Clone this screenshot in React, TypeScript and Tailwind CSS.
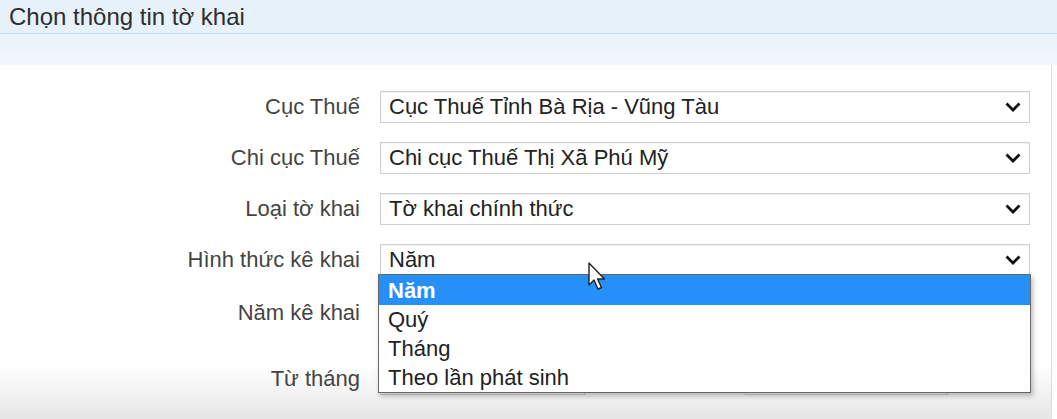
import React from "react";

const Chevron = () => (
  <svg width="16" height="10" viewBox="0 0 16 10" className="shrink-0">
    <path d="M1.5 1.5 L8 8 L14.5 1.5" fill="none" stroke="#111" strokeWidth="2.8" />
  </svg>
);

const Select = ({ value, className = "" }: { value?: string; className?: string }) => (
  <div
    className={`h-[32px] shrink-0 flex items-center justify-between pl-[8px] pr-[8px] bg-white border border-[#cfcfcf] shadow-[inset_0_1px_1px_rgba(0,0,0,0.06)] text-[22px] text-[#222] ${className}`}
  >
    <span className="leading-none">{value}</span>
    <Chevron />
  </div>
);

const Label = ({ text }: { text: string }) => (
  <div className="w-[360px] shrink-0 text-right text-[22px] leading-none text-[#444]">{text}</div>
);

const rows = [
  { label: "Cục Thuế", value: "Cục Thuế Tỉnh Bà Rịa - Vũng Tàu" },
  { label: "Chi cục Thuế", value: "Chi cục Thuế Thị Xã Phú Mỹ" },
  { label: "Loại tờ khai", value: "Tờ khai chính thức" },
  { label: "Hình thức kê khai", value: "Năm" },
];

const options = ["Năm", "Quý", "Tháng", "Theo lần phát sinh"];

export default function App() {
  return (
    <div className="relative w-[1057px] h-[419px] overflow-hidden bg-white font-['Liberation_Sans',Arial,sans-serif] flex flex-col">
      <div className="h-[34px] shrink-0 bg-[#e7f1fa] border-b border-[#c6ddef] px-[9px] flex items-center text-[24px] text-[#2e2e2e]">
        Chọn thông tin tờ khai
      </div>
      <div className="h-[31px] shrink-0 bg-linear-to-b from-[#e9f3fb] to-[#f1f7fd]" />

      <div className="flex-1 bg-linear-to-b from-white from-85% to-[#e6e6e6] border-r border-[#dedede] mr-[5px] pt-[26px]">
        <div className="flex flex-col gap-[19px]">
          {rows.map((r) => (
            <div key={r.label} className="h-[32px] flex items-center gap-[20px]">
              <Label text={r.label} />
              <Select value={r.value} className="w-[650px]" />
            </div>
          ))}
        </div>

        <div className="h-[32px] flex items-center gap-[20px] mt-[21px]">
          <Label text="Năm kê khai" />
          <Select className="w-[205px]" />
        </div>

        <div className="h-[32px] flex items-center mt-[34px]">
          <Label text="Từ tháng" />
          <Select className="w-[205px] ml-[20px]" />
          <div className="w-[160px] shrink-0" />
          <Select className="w-[203px]" />
        </div>
      </div>

      {/* open dropdown list */}
      <div className="absolute left-[378px] top-[274px] w-[653px] bg-white border border-[#666] shadow-[2px_3px_5px_rgba(0,0,0,0.25)] text-[22px] text-[#222]">
        {options.map((o, i) => (
          <div
            key={o}
            className={
              i === 0
                ? "h-[30px] flex items-center pl-[9px] bg-[#2490f8] text-white font-bold"
                : "h-[29px] flex items-center pl-[9px]"
            }
          >
            {o}
          </div>
        ))}
      </div>

      {/* mouse cursor */}
      <svg
        className="absolute left-[588px] top-[262px]"
        width="22"
        height="30"
        viewBox="0 0 22 30"
      >
        <path
          d="M1 1 L1 23 L6 18 L10 27 L13.5 25.5 L9.5 17 L16.5 17 Z"
          fill="#fff"
          stroke="#222"
          strokeWidth="1.4"
          strokeLinejoin="round"
        />
      </svg>
    </div>
  );
}
